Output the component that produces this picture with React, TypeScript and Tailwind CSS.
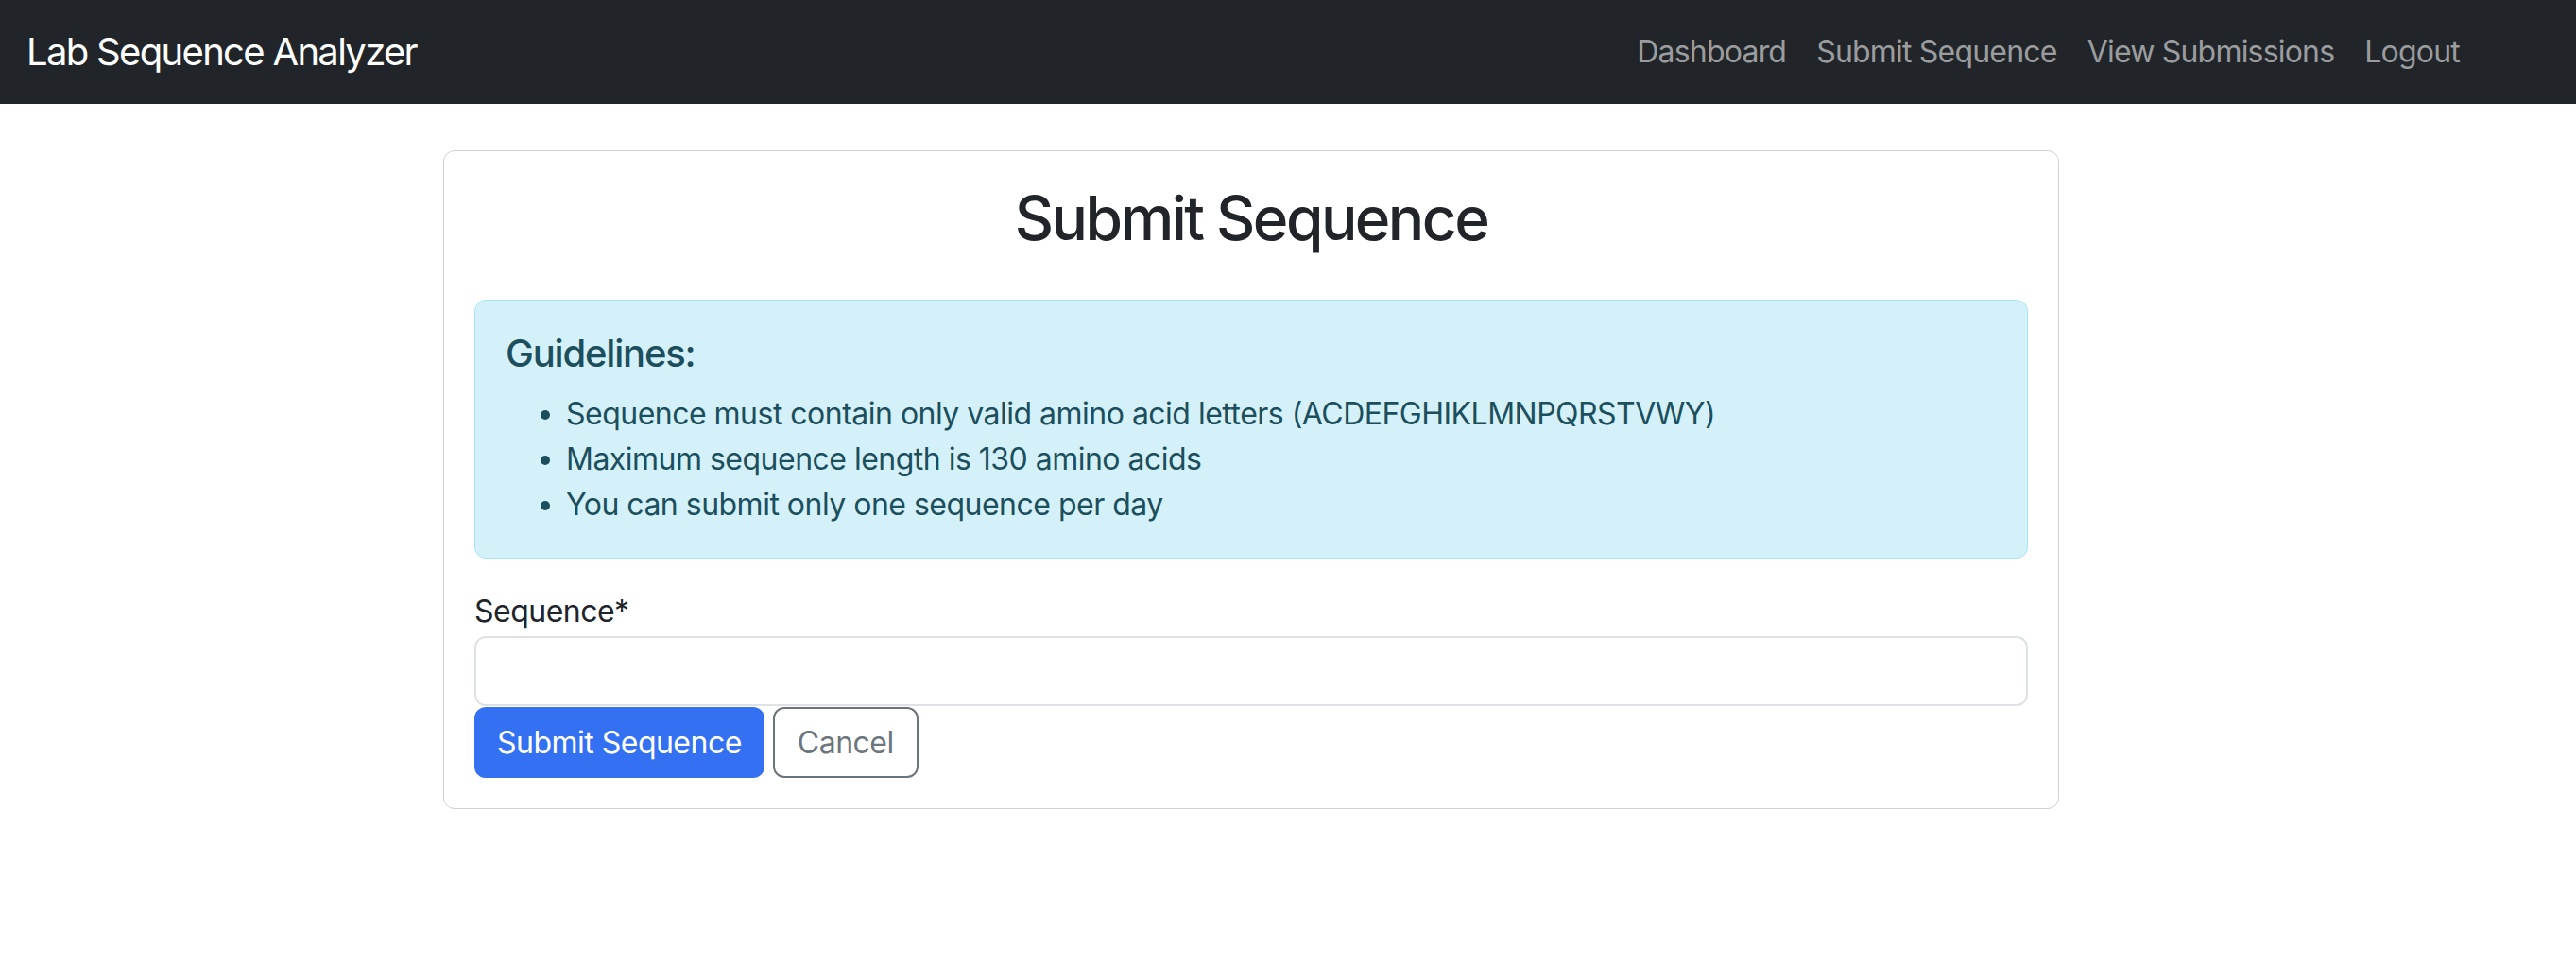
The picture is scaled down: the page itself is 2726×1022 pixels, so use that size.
import React, { useState } from "react";

const font = "font-['Inter','Noto_Sans',sans-serif]";

function Navbar() {
  const links = ["Dashboard", "Submit Sequence", "View Submissions", "Logout"];
  return (
    <nav className="flex h-[110px] items-center justify-between bg-[#212529] pl-[28px] pr-[123px]">
      <a className="text-[40px] leading-[48px] tracking-[-0.042em] text-white">Lab Sequence Analyzer</a>
      <ul className="flex items-center gap-[32px]">
        {links.map((l) => (
          <li key={l}>
            <a className="text-[32px] leading-[48px] tracking-[-0.025em] text-[#9b9c9e]">{l}</a>
          </li>
        ))}
      </ul>
    </nav>
  );
}

export default function App() {
  const [sequence, setSequence] = useState("");

  return (
    <div className={`${font} min-h-[1022px] bg-white tracking-[-0.032em] text-[#212529]`}>
      <Navbar />
      <div className="pl-[469px] pt-[49px]">
        <div className="w-[1710px] rounded-[12px] border border-[#d0d0d0] p-[32px]">
          <h2 className="mb-[48px] text-center text-[64px] font-medium leading-[77px] tracking-[-0.04em]">
            Submit Sequence
          </h2>

          <div className="mb-[32px] rounded-[12px] border border-[#a9e6f5] bg-[#d4f1f9] p-[32px] text-[#1c4f5d]">
            <h5 className="mb-[16px] text-[40px] font-medium leading-[48px] tracking-[-0.03em]">Guidelines:</h5>
            <ul className="list-disc pl-[64px] text-[32px] leading-[48px]">
              <li>Sequence must contain only valid amino acid letters (ACDEFGHIKLMNPQRSTVWY)</li>
              <li>Maximum sequence length is 130 amino acids</li>
              <li>You can submit only one sequence per day</li>
            </ul>
          </div>

          <label htmlFor="sequence" className="block text-[32px] leading-[48px]">
            Sequence*
          </label>
          <input
            id="sequence"
            type="text"
            value={sequence}
            onChange={(e) => setSequence(e.target.value)}
            className="mt-[2px] block h-[74px] w-full rounded-[12px] border-2 border-[#dee2e6] px-[24px] text-[32px] outline-none"
          />
          <div className="mt-px flex gap-[9px]">
            <button className="h-[75px] rounded-[12px] bg-[#3370f2] px-[24px] text-[32px] text-white">
              Submit Sequence
            </button>
            <button className="h-[75px] rounded-[12px] border-2 border-[#6c757d] px-[24px] text-[32px] text-[#6c757d]">
              Cancel
            </button>
          </div>
        </div>
      </div>
    </div>
  );
}
